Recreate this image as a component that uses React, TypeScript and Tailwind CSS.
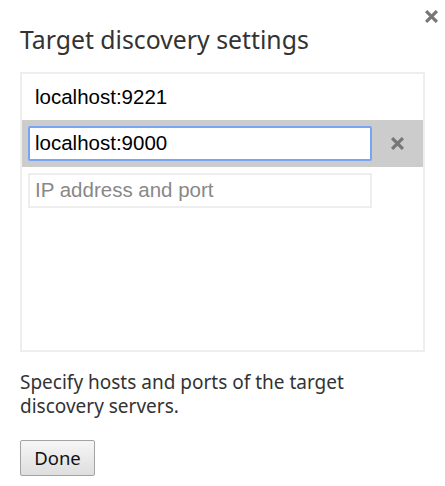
import React from "react";

function XIcon({ className }: { className?: string }) {
  return (
    <svg viewBox="0 0 12 12" className={className} fill="none">
      <path d="M1 1L11 11M11 1L1 11" stroke="currentColor" strokeWidth="3" strokeLinecap="butt" />
    </svg>
  );
}

export default function App() {
  return (
    <div className="relative w-[445px] h-[486px] bg-white px-5 pt-[22px]" style={{ fontFamily: '"Noto Sans", sans-serif' }}>
      <button className="absolute top-[10px] right-[7px] w-[13px] h-[13px] text-[#777]">
        <XIcon className="w-[13px] h-[13px]" />
      </button>
      <h1 className="text-[24.8px] leading-[34px] text-[#333] font-normal">Target discovery settings</h1>
      <div className="mt-[16px] h-[280px] border-2 border-[#eeeeee] flex flex-col" style={{ fontFamily: '"Liberation Sans", Arial, sans-serif' }}>
        <div className="h-[46px] flex items-center pl-[13px] text-[20.5px] text-black">localhost:9221</div>
        <div className="h-[47px] bg-[#cccccc] flex items-center pl-[6px]">
          <div className="w-[344px] h-[35px] border-2 border-[#78a5f2] rounded-[2px] bg-white flex items-center pl-[5px] text-[20.5px] text-black">localhost:9000</div>
          <div className="flex-1 flex justify-center text-[#777]">
            <XIcon className="w-[13px] h-[13px]" />
          </div>
        </div>
        <div className="h-[47px] flex items-center pl-[6px]">
          <div className="w-[344px] h-[35px] border-2 border-[#eeeeee] bg-white flex items-center pl-[5px] text-[20.5px] text-[#888]">IP address and port</div>
        </div>
      </div>
      <p className="mt-[18px] text-[19px] leading-[24px] text-[#333] w-[380px]">Specify hosts and ports of the target discovery servers.</p>
      <button className="mt-[22px] w-[75px] h-[36px] border border-[#a3a3a3] rounded-[2px] bg-gradient-to-b from-[#f6f6f6] to-[#dedede] text-[18.5px] leading-none text-[#111]">Done</button>
    </div>
  );
}
